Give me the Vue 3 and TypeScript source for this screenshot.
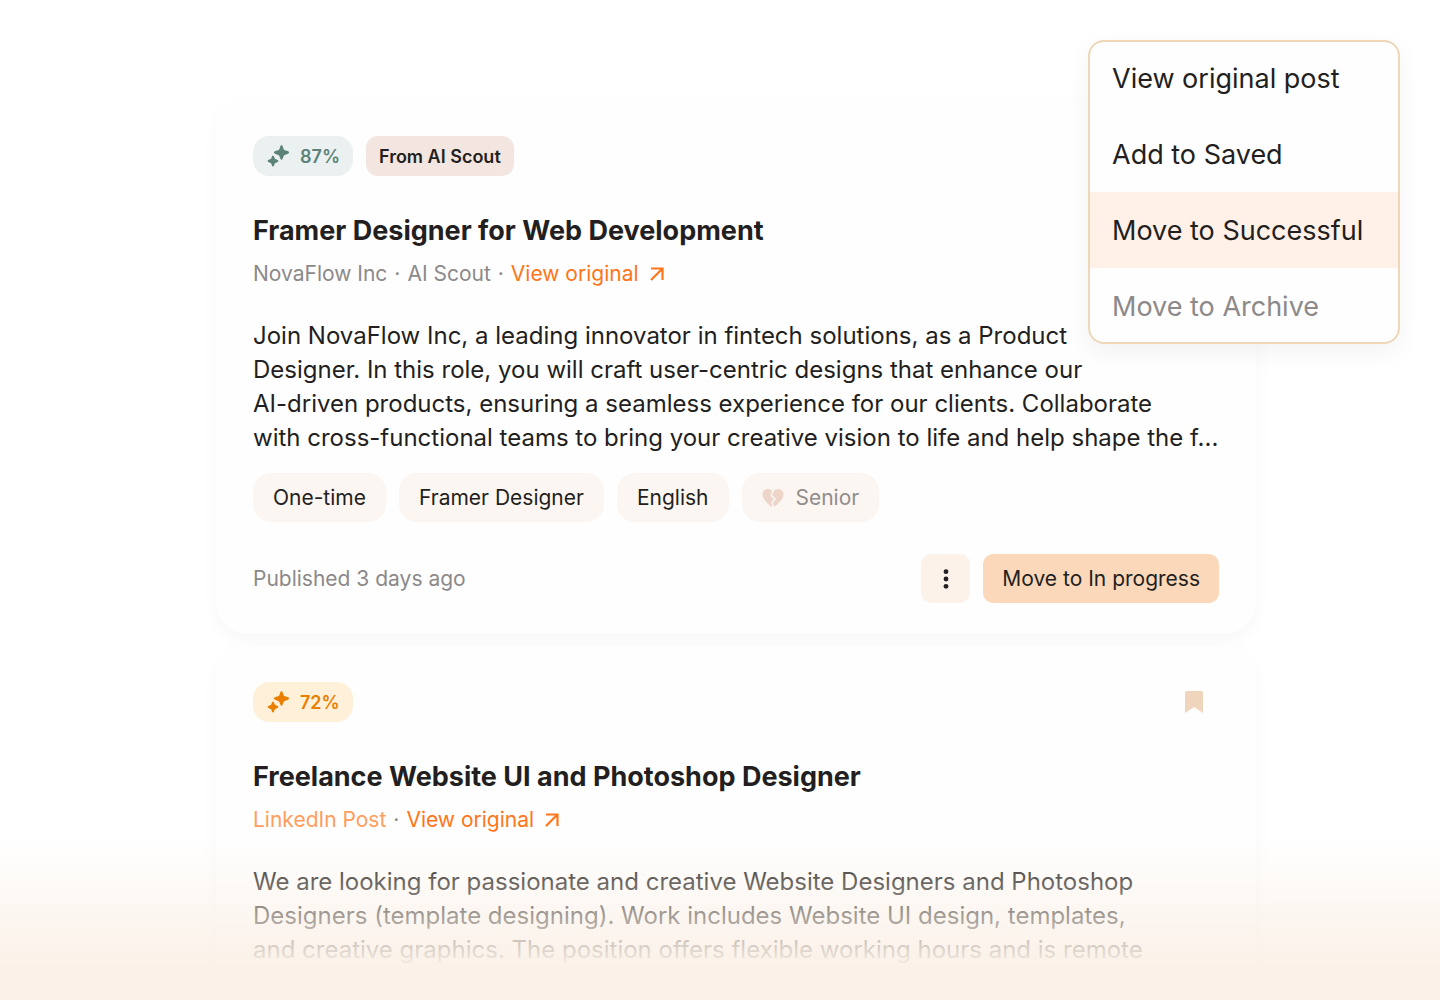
<script setup lang="ts">
interface Source {
  text: string
  link?: boolean
}

interface Job {
  id: number
  match: number
  tone: 'green' | 'amber'
  scout: boolean
  saved: boolean
  title: string
  sources: Source[]
  lines: string[]
  tags: { text: string; muted?: boolean }[]
  published: string
}

const jobs: Job[] = [
  {
    id: 1,
    match: 87,
    tone: 'green',
    scout: true,
    saved: false,
    title: 'Framer Designer for Web Development',
    sources: [{ text: 'NovaFlow Inc' }, { text: 'AI Scout' }],
    lines: [
      'Join NovaFlow Inc, a leading innovator in fintech solutions, as a Product',
      'Designer. In this role, you will craft user-centric designs that enhance our',
      'AI-driven products, ensuring a seamless experience for our clients. Collaborate',
      'with cross-functional teams to bring your creative vision to life and help shape the f...',
    ],
    tags: [
      { text: 'One-time' },
      { text: 'Framer Designer' },
      { text: 'English' },
      { text: 'Senior', muted: true },
    ],
    published: 'Published 3 days ago',
  },
  {
    id: 2,
    match: 72,
    tone: 'amber',
    scout: false,
    saved: true,
    title: 'Freelance Website UI and Photoshop Designer',
    sources: [{ text: 'LinkedIn Post', link: true }],
    lines: [
      'We are looking for passionate and creative Website Designers and Photoshop',
      'Designers (template designing). Work includes Website UI design, templates,',
      'and creative graphics. The position offers flexible working hours and is remote',
    ],
    tags: [],
    published: '',
  },
]

const menu = [
  { text: 'View original post', state: '' },
  { text: 'Add to Saved', state: '' },
  { text: 'Move to Successful', state: 'active' },
  { text: 'Move to Archive', state: 'muted' },
]
</script>

<template>
  <main class="page">
    <section class="feed">
      <article v-for="job in jobs" :key="job.id" class="card">
        <div class="top">
          <span class="match" :class="job.tone">
            <svg width="24" height="24" viewBox="0 0 24 24" fill="currentColor" stroke="currentColor" stroke-width="1.500" stroke-linejoin="round" aria-hidden="true">
              <path d="M15.500 1.800C16 1.800 16.500 5 17.500 6.200C18.700 7.300 22.500 7.900 22.500 8.500C22.500 9.100 18.700 9.700 17.500 10.800C16.500 12 16 15.200 15.500 15.200C15 15.200 14.500 12 13.500 10.800C12.300 9.700 8.500 9.100 8.500 8.500C8.500 7.900 12.300 7.300 13.500 6.200C14.500 5 15 1.800 15.500 1.800Z" />
              <path d="M7 12.200C7.400 12.200 7.600 14.300 8.400 15.200C9.300 16 11.700 16.500 11.700 17C11.700 17.500 9.300 18 8.400 18.800C7.600 19.700 7.400 21.800 7 21.800C6.600 21.800 6.400 19.700 5.600 18.800C4.700 18 2.300 17.500 2.300 17C2.300 16.500 4.700 16 5.600 15.200C6.400 14.300 6.600 12.200 7 12.200Z" />
            </svg>
            {{ job.match }}%
          </span>
          <span v-if="job.scout" class="scout">From AI Scout</span>
          <button v-if="job.saved" class="saved" type="button" aria-label="Saved">
            <svg width="18" height="22" viewBox="0 0 18 22" aria-hidden="true">
              <path d="M2 0H16Q18 0 18 2V22L9 16L0 22V2Q0 0 2 0Z" fill="#efd5bc" />
            </svg>
          </button>
        </div>
        <h2>{{ job.title }}</h2>
        <div class="meta">
          <template v-for="source in job.sources" :key="source.text">
            <a v-if="source.link" class="soft" href="#">{{ source.text }}</a>
            <span v-else>{{ source.text }}</span>
            <span>·</span>
          </template>
          <a class="original" href="#">
            View original
            <svg width="16" height="16" viewBox="0 0 16 16" fill="none" stroke="currentColor" stroke-width="2.200" aria-hidden="true">
              <path d="M2 2.500H13.500V14M13 3L2 14" />
            </svg>
          </a>
        </div>
        <p class="text">
          <span v-for="line in job.lines" :key="line">{{ line }}</span>
        </p>
        <ul v-if="job.tags.length" class="tags">
          <li v-for="tag in job.tags" :key="tag.text" :class="{ muted: tag.muted }">
            <svg v-if="tag.muted" width="22" height="20" viewBox="0 0 22 20" aria-hidden="true">
              <path d="M11 19C9.500 19 0.500 12.500 0.500 6.500C0.500 3.200 2.900 1 5.900 1C8.200 1 10 2.200 11 3.800C12 2.200 13.800 1 16.100 1C19.100 1 21.500 3.200 21.500 6.500C21.500 12.500 12.500 19 11 19Z" fill="#edd5c9" />
              <path d="M11.500 1L9.300 7.800L13.200 10.800L10.200 14L11.200 19.500" fill="none" stroke="#fcf6f2" stroke-width="1.500" />
            </svg>
            {{ tag.text }}
          </li>
        </ul>
        <footer v-if="job.published">
          <span>{{ job.published }}</span>
          <div class="actions">
            <button class="more" type="button" aria-label="More actions">
              <svg width="6" height="20" viewBox="0 0 6 20" fill="#231f20" aria-hidden="true">
                <circle cx="3" cy="2.700" r="2.400" />
                <circle cx="3" cy="10" r="2.400" />
                <circle cx="3" cy="17.300" r="2.400" />
              </svg>
            </button>
            <button class="move" type="button">Move to In progress</button>
          </div>
        </footer>
      </article>
    </section>
    <div class="fade"></div>
    <div class="menu" role="menu">
      <button v-for="item in menu" :key="item.text" type="button" role="menuitem" :class="item.state">
        {{ item.text }}
      </button>
    </div>
  </main>
</template>

<style>
body {
  margin: 0;
}
</style>

<style scoped>
.page {
  position: relative;
  height: 100vh;
  overflow: hidden;
  box-sizing: border-box;
  padding: 100px 184px 0 216px;
  background: #fff;
  color: #231f20;
  font-family: Inter, "Liberation Sans", sans-serif;
}
button {
  border: 0;
  padding: 0;
  background: none;
  color: inherit;
  font: inherit;
}
a {
  color: inherit;
  text-decoration: none;
}
.feed {
  display: flex;
  flex-direction: column;
  gap: 12px;
}
.card {
  padding: 36px 37px 31px;
  border-radius: 32px;
  background: #fefefe;
  box-shadow: 0 6px 18px rgba(0, 0, 0, 0.035);
}
.top {
  display: flex;
  align-items: center;
  gap: 13px;
  height: 40px;
}
.match,
.scout {
  display: flex;
  align-items: center;
  gap: 10px;
  box-sizing: border-box;
  height: 40px;
  padding: 0 13px;
  font-size: 18px;
  font-weight: 600;
}
.match {
  border-radius: 16px;
}
.green {
  background: #ebf0f1;
  color: #5c8279;
}
.amber {
  background: #fff1d9;
  color: #ea7f00;
}
.scout {
  border-radius: 12px;
  background: #f3e6e0;
}
.saved {
  display: flex;
  margin-left: auto;
  padding: 0 16px;
}
h2 {
  margin: 37px 0 0;
  font-size: 27px;
  line-height: 36px;
  font-weight: 650;
}
.meta {
  display: flex;
  gap: 7px;
  margin-top: 10px;
  color: #8c898a;
  font-size: 21px;
  line-height: 30px;
}
.soft {
  color: #ff9d5c;
}
.original {
  display: flex;
  align-items: center;
  gap: 10px;
  color: #ff7519;
}
.text {
  margin: 30px 0 0;
  font-size: 24px;
  line-height: 34px;
}
.text span {
  display: block;
  white-space: nowrap;
}
.tags {
  display: flex;
  gap: 13px;
  margin: 18px 0 0;
  padding: 0;
  list-style: none;
  font-size: 21px;
}
.tags li {
  display: flex;
  align-items: center;
  gap: 12px;
  height: 49px;
  padding: 0 20px;
  border-radius: 18px;
  background: #fcf6f2;
}
.tags .muted {
  color: #918d8c;
}
footer {
  display: flex;
  align-items: center;
  justify-content: space-between;
  margin-top: 32px;
  color: #8c898a;
  font-size: 21px;
}
.actions {
  display: flex;
  gap: 13px;
  color: #231f20;
}
.more {
  display: flex;
  align-items: center;
  justify-content: center;
  width: 49px;
  height: 49px;
  border-radius: 10px;
  background: #fcf2ea;
}
.move {
  height: 49px;
  padding: 0 19px;
  border-radius: 10px;
  background: #fad8b9;
}
.fade {
  position: absolute;
  right: 0;
  bottom: 0;
  left: 0;
  height: 160px;
  background: linear-gradient(rgba(251, 241, 232, 0), #fbf1e8 80%);
}
.menu {
  position: absolute;
  top: 40px;
  right: 40px;
  display: flex;
  flex-direction: column;
  width: 312px;
  overflow: hidden;
  outline: 2px solid #eed7b9;
  outline-offset: -2px;
  border-radius: 16px;
  background: #fefefe;
  box-shadow: 0 8px 24px rgba(30, 10, 40, 0.05);
}
.menu button {
  height: 76px;
  padding: 0 24px;
  font-size: 27px;
  text-align: left;
}
.menu .active {
  background: #fff1e8;
}
.menu .muted {
  color: #8c898a;
}
</style>
